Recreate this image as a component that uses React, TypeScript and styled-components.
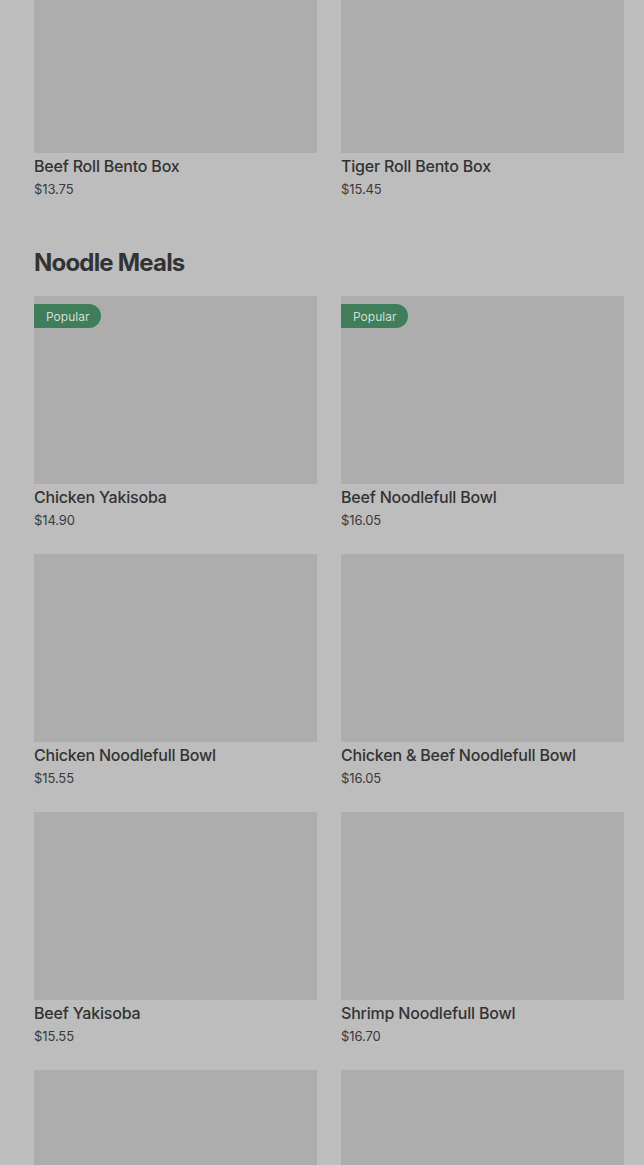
import styled, { createGlobalStyle } from 'styled-components';

const GlobalStyle = createGlobalStyle`
  html, body {
    margin: 0;
    padding: 0;
    background: #bdbdbd;
    font-family: Inter, "Noto Sans", sans-serif;
  }
`;

const Page = styled.div`
  width: 644px;
  background: #bdbdbd;
  box-sizing: border-box;
  padding: 0 20px 0 34px;
`;

const Scroller = styled.div`
  margin-top: -35px;
`;

const Section = styled.section`
  margin-bottom: 48px;
`;

const SectionTitle = styled.h2`
  margin: 0 0 17px;
  font-size: 24px;
  line-height: 32px;
  font-weight: 700;
  letter-spacing: -0.8px;
  color: #333333;
`;

const Grid = styled.div`
  display: grid;
  grid-template-columns: 283px 283px;
  column-gap: 24px;
  row-gap: 24px;
`;

const Card = styled.div`
  display: flex;
  flex-direction: column;
`;

const ImageBox = styled.div`
  position: relative;
  height: 188px;
  background: #adadad;
  margin-bottom: 1px;
`;

const Badge = styled.span`
  position: absolute;
  top: 8px;
  left: 0;
  height: 24px;
  padding: 0 12px;
  display: flex;
  align-items: center;
  background: #3f7d5b;
  color: #cfdfd4;
  font-size: 12px;
  border-radius: 0 12px 12px 0;
`;

const Name = styled.div`
  font-size: 16px;
  line-height: 24px;
  font-weight: 500;
  color: #333333;
  letter-spacing: -0.2px;
`;

const Price = styled.div`
  margin-top: 1px;
  font-size: 13px;
  line-height: 20px;
  color: #3a3a3a;
  letter-spacing: -0.1px;
`;

type Item = { name: string; price: string; popular?: boolean };

const bento: Item[] = [
  { name: 'Beef Roll Bento Box', price: '$13.75' },
  { name: 'Tiger Roll Bento Box', price: '$15.45' },
];

const noodles: Item[] = [
  { name: 'Chicken Yakisoba', price: '$14.90', popular: true },
  { name: 'Beef Noodlefull Bowl', price: '$16.05', popular: true },
  { name: 'Chicken Noodlefull Bowl', price: '$15.55' },
  { name: 'Chicken & Beef Noodlefull Bowl', price: '$16.05' },
  { name: 'Beef Yakisoba', price: '$15.55' },
  { name: 'Shrimp Noodlefull Bowl', price: '$16.70' },
  { name: 'Vegetable Yakisoba', price: '$13.90' },
  { name: 'Tofu Noodlefull Bowl', price: '$14.60' },
];

function MenuCard({ item }: { item: Item }) {
  return (
    <Card>
      <ImageBox>{item.popular && <Badge>Popular</Badge>}</ImageBox>
      <Name>{item.name}</Name>
      <Price>{item.price}</Price>
    </Card>
  );
}

export default function App() {
  return (
    <Page>
      <GlobalStyle />
      <Scroller>
        <Section>
          <Grid>
            {bento.map((item) => (
              <MenuCard key={item.name} item={item} />
            ))}
          </Grid>
        </Section>
        <Section>
          <SectionTitle>Noodle Meals</SectionTitle>
          <Grid>
            {noodles.map((item) => (
              <MenuCard key={item.name} item={item} />
            ))}
          </Grid>
        </Section>
      </Scroller>
    </Page>
  );
}
